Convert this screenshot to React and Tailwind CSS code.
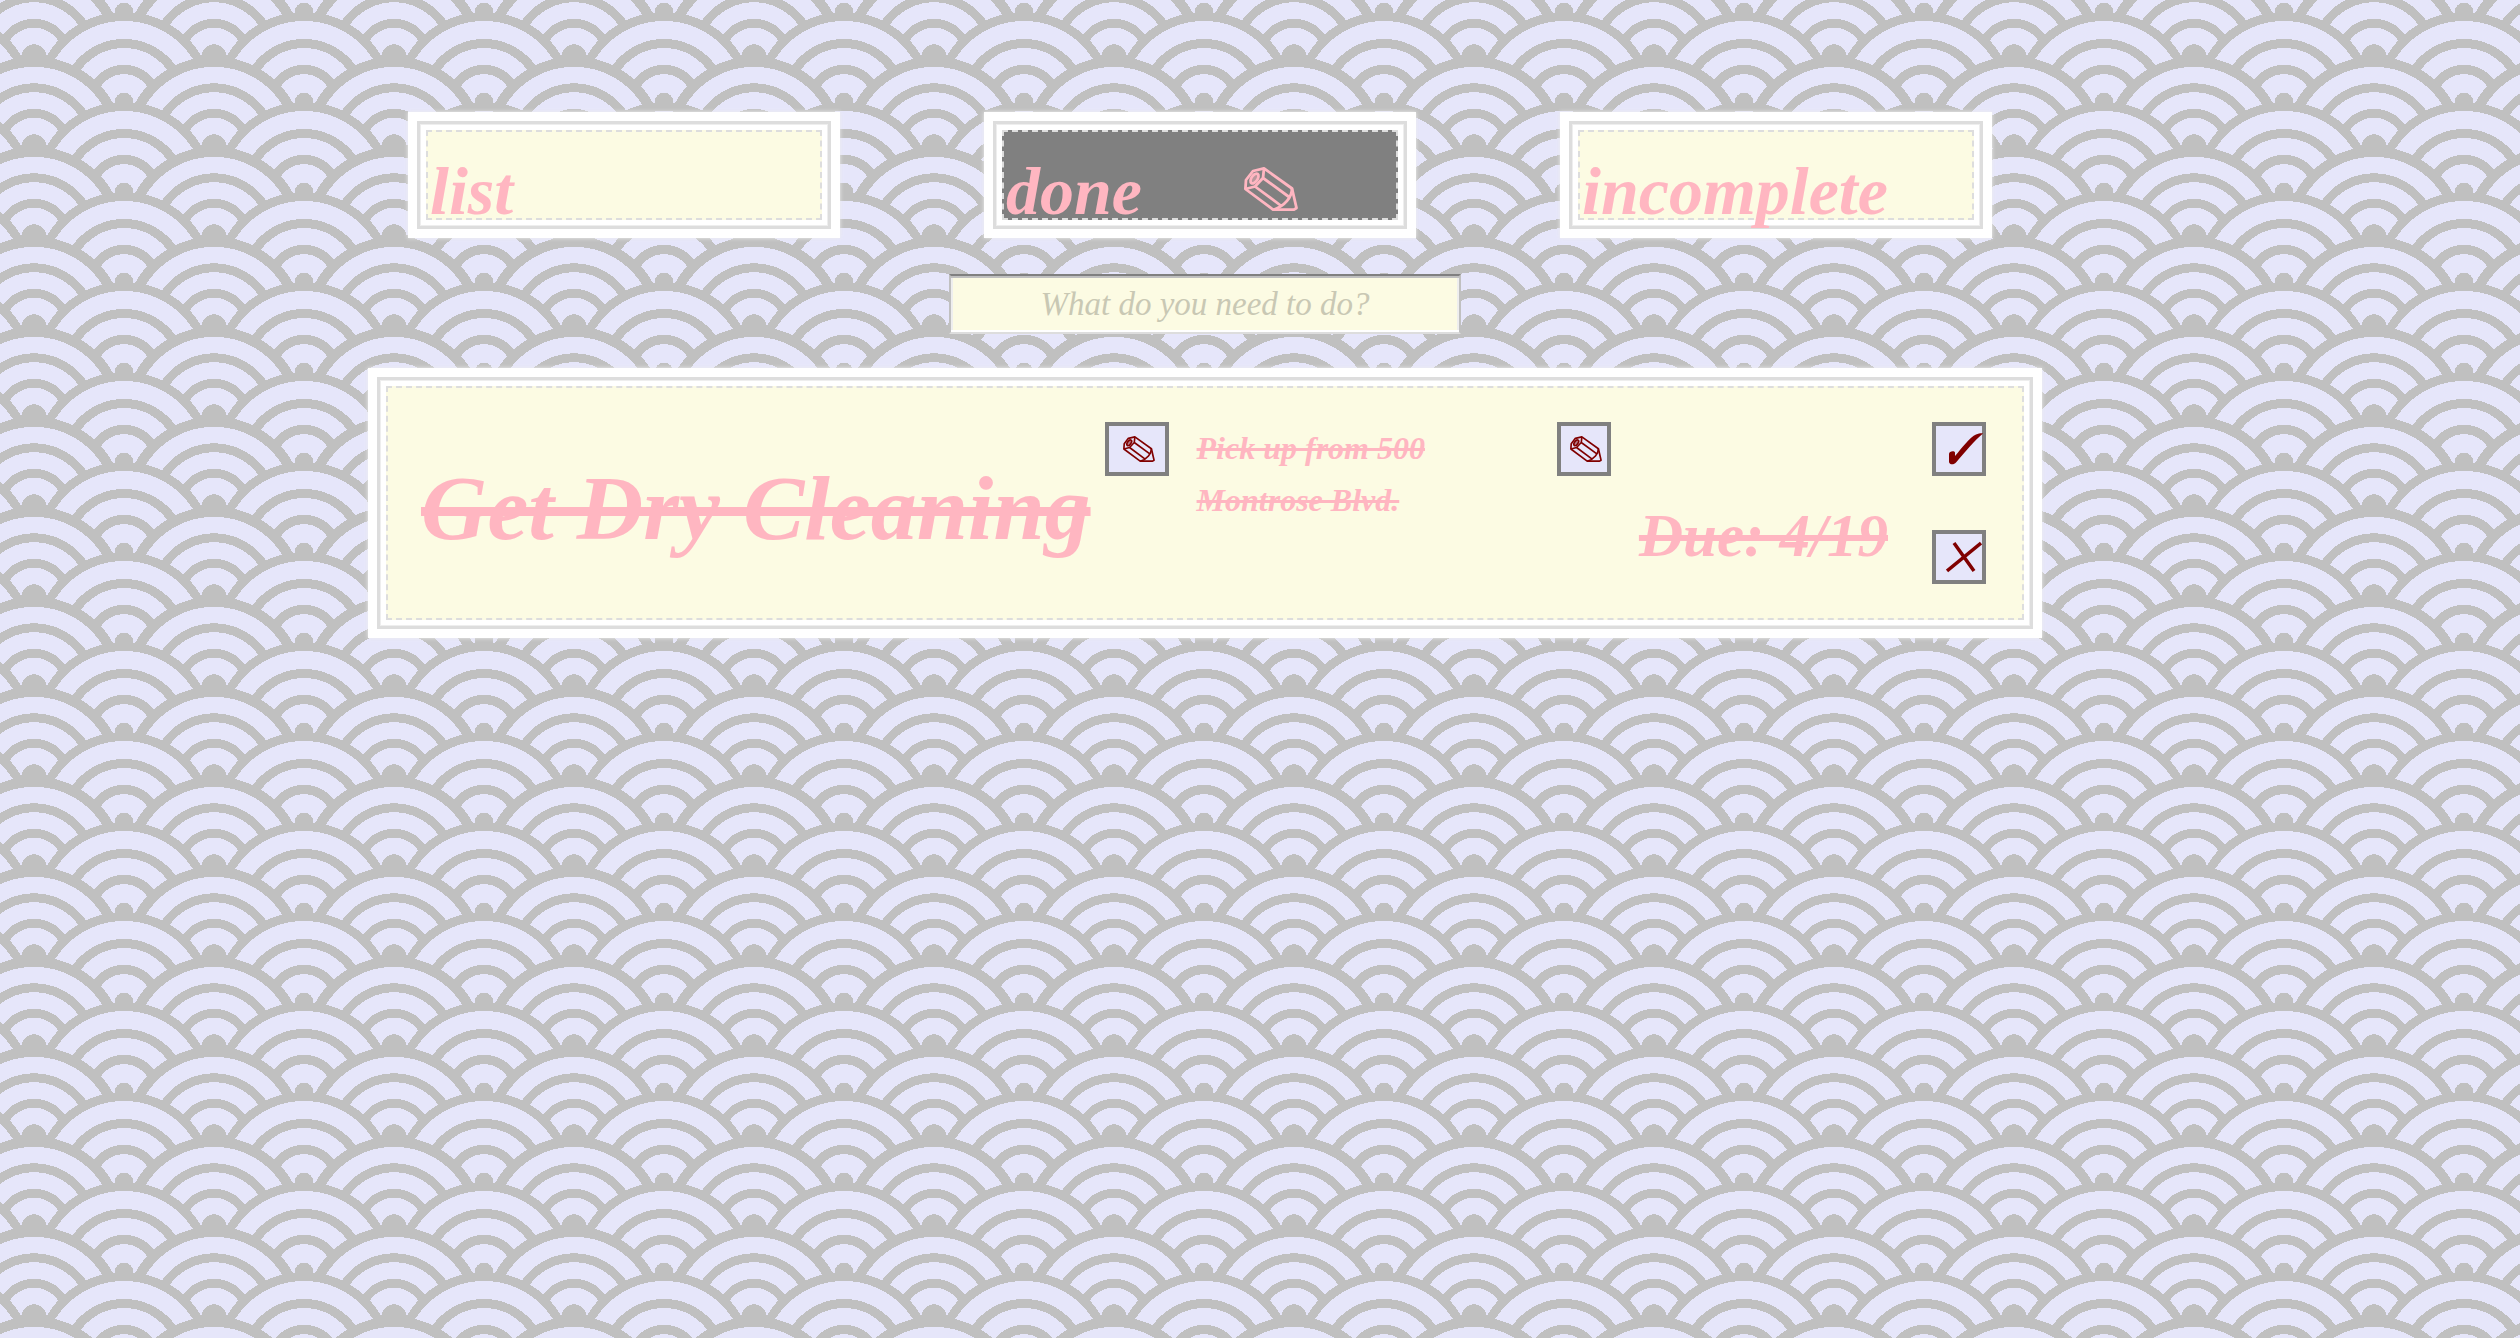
const frame =
  "border-2 border-dashed border-[#dddddd] shadow-[0_0_0_5px_#fff,0_0_0_6px_#eee,0_0_0_9px_#ddd,0_0_0_18px_#fff,0_0_4px_18px_#eee]";

const waves =
  "bg-[#e6e6fa] bg-size-[180px_90px] bg-position-[124px_57px] bg-[image:radial-gradient(circle_at_100%_150%,#e6e6fa_24%,#c0c0c0_24%,#c0c0c0_28%,#e6e6fa_28%,#e6e6fa_36%,#c0c0c0_36%,#c0c0c0_40%,transparent_40%,transparent),radial-gradient(circle_at_0_150%,#e6e6fa_24%,#c0c0c0_24%,#c0c0c0_28%,#e6e6fa_28%,#e6e6fa_36%,#c0c0c0_36%,#c0c0c0_40%,transparent_40%,transparent),radial-gradient(circle_at_50%_100%,#c0c0c0_10%,#e6e6fa_10%,#e6e6fa_23%,#c0c0c0_23%,#c0c0c0_30%,#e6e6fa_30%,#e6e6fa_43%,#c0c0c0_43%,#c0c0c0_50%,#e6e6fa_50%,#e6e6fa_63%,#c0c0c0_63%,#c0c0c0_71%,transparent_71%,transparent),radial-gradient(circle_at_100%_50%,#c0c0c0_5%,#e6e6fa_5%,#e6e6fa_15%,#c0c0c0_15%,#c0c0c0_20%,#e6e6fa_20%,#e6e6fa_29%,#c0c0c0_29%,#c0c0c0_34%,#e6e6fa_34%,#e6e6fa_44%,#c0c0c0_44%,#c0c0c0_49%,transparent_49%,transparent),radial-gradient(circle_at_0_50%,#c0c0c0_5%,#e6e6fa_5%,#e6e6fa_15%,#c0c0c0_15%,#c0c0c0_20%,#e6e6fa_20%,#e6e6fa_29%,#c0c0c0_29%,#c0c0c0_34%,#e6e6fa_34%,#e6e6fa_44%,#c0c0c0_44%,#c0c0c0_49%,transparent_49%,transparent)]";

function Pencil({ className }) {
  return (
    <svg
      viewBox="0 0 54 44"
      className={className}
      fill="none"
      stroke="currentColor"
      strokeWidth="2.8"
      strokeLinejoin="round"
      aria-hidden="true"
    >
      <path d="M1.400 22 2 13 9 4 20 1.400 48 21.500 52.500 41 50 42.600H29Z" />
      <path d="M1.400 22 11 19.500 19 11 20 1.400M19 11 46.500 31M11 19.500 38 39.500M48 21.500C48 30 41 39 29 43" />
      <ellipse cx="10.500" cy="11.500" rx="3" ry="5.500" transform="rotate(35 10.500 11.500)" fill="currentColor" fillOpacity="0.45" />
    </svg>
  );
}

function Check() {
  return (
    <svg viewBox="0 0 34 32" className="ml-3.5 h-8 w-[34px] shrink-0" fill="currentColor" aria-hidden="true">
      <path d="M0 21C0 18 5.500 17.500 6 19.500V23C13 15 21 4 27 1.500 30 0.300 33 0 34 0.500 26 7 16 19 7 29.500 5 32 0.500 32 0 29Z" />
    </svg>
  );
}

function Cross() {
  return (
    <svg viewBox="0 0 36 32" className="ml-2.5 h-8 w-9 shrink-0" stroke="currentColor" strokeWidth="3.500" aria-hidden="true">
      <path d="M1 30 35 2M8 2 28 30" />
    </svg>
  );
}

function Tab({ label, active, children }) {
  return (
    <button
      type="button"
      aria-pressed={Boolean(active)}
      className={`${frame} ${active ? "bg-[#808080]" : "bg-[#fcfbe3]"} flex h-[90px] w-[396px] items-center text-[68px] leading-[90px] font-bold italic`}
    >
      <span className="pt-8 pl-0.5">{label}</span>
      {children}
    </button>
  );
}

function SquareButton({ label, className, children }) {
  return (
    <button
      type="button"
      aria-label={label}
      className={`${className} flex h-[54px] shrink-0 items-center justify-center border-4 border-[#808080] bg-[#e6e6fa] text-[#800000]`}
    >
      {children}
    </button>
  );
}

export default function App() {
  return (
    <div className={`${waves} min-h-screen pt-[130px] pr-[110px] font-["Apple_Chancery","Liberation_Serif",serif] text-[#ffb6c1]`}>
      <main className="mx-auto flex max-w-[1638px] flex-col items-center">
        <nav className="flex w-full gap-[180px] pl-10">
          <Tab label="list" />
          <Tab label="done" active>
            <Pencil className="mt-7 ml-[102px] h-[44px] w-[54px]" />
          </Tab>
          <Tab label="incomplete" />
        </nav>

        <input
          aria-label="What do you need to do?"
          placeholder="What do you need to do?"
          className="mt-[54px] h-[60px] w-[512px] border-2 border-t-[#808080] border-r-[#c0c0c0] border-b-[#dddddd] border-l-[#c0c0c0] bg-[#fcfbe3] text-center text-[33px] italic shadow-[inset_0_2px_#c0c0c0,inset_0_-2px_#fff,inset_0_0_0_2px_#eee] outline-none placeholder:text-[#c9c8b4] placeholder:opacity-100"
        />

        <article className={`${frame} mt-[52px] flex h-[234px] w-full items-start bg-[#fcfbe3] pt-[34px] pr-9 pl-[33px]`}>
          <h1 className="mt-[34px] text-[92px] leading-[104px] font-bold whitespace-nowrap italic line-through">Get Dry Cleaning</h1>
          <SquareButton label="Edit title" className="ml-3.5 w-16">
            <Pencil className="ml-1 h-[26px] w-8" />
          </SquareButton>
          <p className="ml-7 w-[280px] text-[32px] leading-[52px] font-bold italic line-through">Pick up from 500 Montrose Blvd.</p>
          <div className="ml-auto flex">
            <SquareButton label="Edit notes" className="w-[54px]">
              <Pencil className="ml-1 h-[26px] w-8" />
            </SquareButton>
            <h2 className="mt-20 ml-7 text-[61px] leading-[68px] font-bold whitespace-nowrap italic line-through">Due: 4/19</h2>
            <div className="ml-11 flex flex-col gap-[54px]">
              <SquareButton label="Mark complete" className="w-[54px]">
                <Check />
              </SquareButton>
              <SquareButton label="Delete" className="w-[54px]">
                <Cross />
              </SquareButton>
            </div>
          </div>
        </article>
      </main>
    </div>
  );
}
